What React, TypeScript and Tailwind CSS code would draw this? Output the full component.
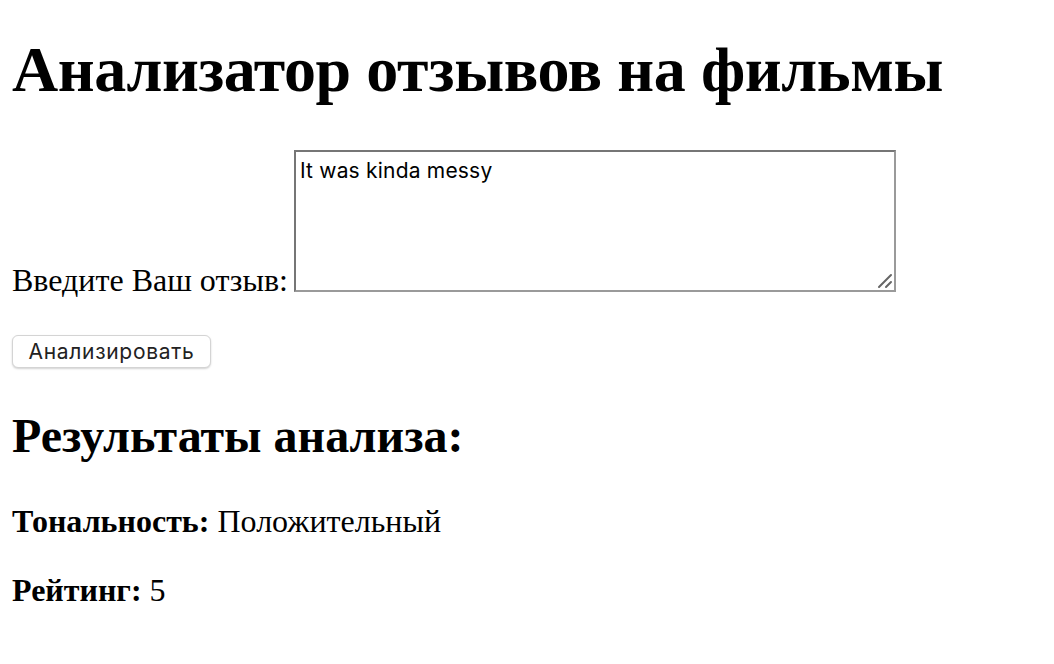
export default function App() {
  return (
    <div className="min-h-[664px] bg-white px-[12px] pt-[38px] text-black font-['Liberation_Serif','Times_New_Roman',serif]">
      <h1 className="text-[64px] leading-none font-bold tracking-[-0.4px] whitespace-nowrap">
        Анализатор отзывов на фильмы
      </h1>

      <form className="mt-[48px]" onSubmit={(e) => e.preventDefault()}>
        <div className="flex items-end">
          <label htmlFor="review" className="text-[32px] leading-none whitespace-nowrap">
            Введите Ваш отзыв:
          </label>
          <div className="relative ml-[6px] mb-[4px]">
            <textarea
              id="review"
              defaultValue="It was kinda messy"
              className="block h-[142px] w-[602px] resize-none border-2 border-t-[#767676] border-l-[#767676] border-r-[#9a9a9a] border-b-[#9a9a9a] bg-white px-[4px] pt-[6px] text-[21px] leading-[1.25] tracking-[0.2px] text-black outline-none font-['Inter','Liberation_Sans',sans-serif]"
            />
            {/* resize grip */}
            <svg
              className="pointer-events-none absolute right-[3px] bottom-[3px]"
              width="16"
              height="16"
              viewBox="0 0 16 16"
            >
              <path d="M14 2 L2 14 M14 9 L9 14" stroke="#666" strokeWidth="2" strokeLinecap="round" />
            </svg>
          </div>
        </div>

        <button
          type="submit"
          className="mt-[39px] flex h-[33px] w-[199px] items-center justify-center rounded-[6px] border border-[#d4d4d4] bg-white text-[21px] tracking-[0.7px] text-[#222] shadow-[0_1px_2px_rgba(0,0,0,0.18)] font-['Inter','Liberation_Sans',sans-serif]"
        >
          Анализировать
        </button>
      </form>

      <h2 className="mt-[44px] text-[48px] leading-none font-bold whitespace-nowrap">Результаты анализа:</h2>
      <p className="mt-[45px] text-[32px] leading-none">
        <strong className="font-bold">Тональность:</strong> Положительный
      </p>
      <p className="mt-[37px] text-[32px] leading-none">
        <strong className="font-bold">Рейтинг:</strong> 5
      </p>
    </div>
  );
}
